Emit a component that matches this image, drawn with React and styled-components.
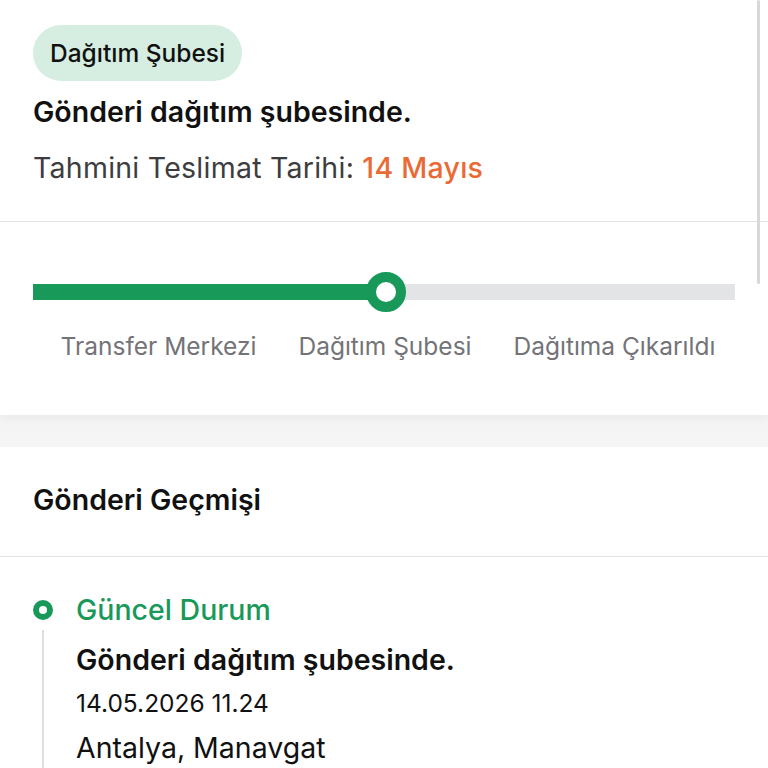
import React from 'react';
import styled, { createGlobalStyle } from 'styled-components';

const GlobalStyle = createGlobalStyle`
  html, body {
    margin: 0;
    padding: 0;
    background: #f5f5f5;
    font-family: Inter, "Noto Sans", sans-serif;
    -webkit-font-smoothing: antialiased;
  }
`;

const Page = styled.div`
  position: relative;
  width: 768px;
  height: 768px;
  overflow: hidden;
  background: #f5f5f5;
`;

const ScrollThumb = styled.div`
  position: absolute;
  top: 0;
  right: 8px;
  width: 3px;
  height: 284px;
  border-radius: 2px;
  background: #d8d8d8;
`;

const Card = styled.section`
  background: #fff;
  box-shadow: ${p => (p.$shadow ? '0 4px 10px rgba(0,0,0,0.05)' : 'none')};
  margin-bottom: ${p => p.$gap || 0}px;
`;

const Summary = styled.div`
  display: flex;
  flex-direction: column;
  align-items: flex-start;
  padding: 25px 33px 0;
  height: 222px;
  box-sizing: border-box;
  border-bottom: 1px solid #e3e3e3;
`;

const Badge = styled.span`
  display: inline-flex;
  align-items: center;
  height: 56px;
  padding: 0 17px;
  border-radius: 28px;
  background: #d5eee1;
  color: #111;
  font-size: 24.5px;
  font-weight: 500;
`;

const Headline = styled.div`
  margin-top: 14px;
  font-size: 28.5px;
  font-weight: 600;
  color: #111;
  line-height: 34px;
`;

const Eta = styled.div`
  margin-top: 22px;
  font-size: 28.5px;
  color: #3d3d3f;
  line-height: 34px;
  letter-spacing: 0.25px;
`;

const EtaDate = styled.span`
  color: #ea6a35;
  font-weight: 500;
`;

const Progress = styled.div`
  height: 193px;
  box-sizing: border-box;
  padding-top: 50px;
`;

const Track = styled.div`
  display: flex;
  align-items: center;
  margin: 0 33px;
  height: 40px;
`;

const Fill = styled.div`
  height: 16px;
  width: ${p => p.$width}px;
  background: ${p => (p.$done ? '#18995a' : '#e3e4e6')};
  flex: ${p => (p.$grow ? 1 : 'none')};
`;

const Knob = styled.div`
  width: 40px;
  height: 40px;
  box-sizing: border-box;
  border-radius: 50%;
  border: 10px solid #18995a;
  background: #fff;
  margin: 0 -20px;
  position: relative;
  z-index: 1;
  flex: none;
`;

const Steps = styled.div`
  display: flex;
  justify-content: center;
  gap: 42px;
  margin-top: 19px;
  padding-left: 8px;
  line-height: 30px;
`;

const Step = styled.span`
  font-size: 24.5px;
  color: #737378;
`;

const HistoryHead = styled.div`
  height: 110px;
  box-sizing: border-box;
  padding: 36px 33px 0;
  border-bottom: 1px solid #e3e3e3;
  font-size: 28.5px;
  font-weight: 600;
  color: #111;
  line-height: 34px;
`;

const Timeline = styled.div`
  padding: 36px 33px 0;
`;

const Entry = styled.div`
  display: grid;
  grid-template-columns: 43px 1fr;
`;

const Rail = styled.div`
  display: flex;
  flex-direction: column;
  align-items: center;
  width: 20px;
  padding-top: 7px;
`;

const Dot = styled.div`
  width: 20px;
  height: 20px;
  box-sizing: border-box;
  border-radius: 50%;
  border: 6px solid #18995a;
  flex: none;
`;

const Line = styled.div`
  width: 2px;
  flex: 1;
  margin-top: 10px;
  background: #dedede;
`;

const EntryBody = styled.div`
  display: flex;
  flex-direction: column;
`;

const EntryTitle = styled.div`
  font-size: 28.5px;
  font-weight: 500;
  color: #18995a;
  line-height: 34px;
`;

const EntryText = styled.div`
  margin-top: ${p => p.$mt}px;
  font-size: ${p => p.$size || 28.5}px;
  font-weight: ${p => p.$weight || 400};
  color: #111;
  line-height: ${p => (p.$size ? 30 : 34)}px;
`;

export default function App() {
  return (
    <Page>
      <GlobalStyle />
      <Card $shadow $gap={32}>
        <Summary>
          <Badge>Dağıtım Şubesi</Badge>
          <Headline>Gönderi dağıtım şubesinde.</Headline>
          <Eta>
            Tahmini Teslimat Tarihi: <EtaDate>14 Mayıs</EtaDate>
          </Eta>
        </Summary>
        <Progress>
          <Track>
            <Fill $done $width={353} />
            <Knob />
            <Fill $grow />
          </Track>
          <Steps>
            <Step>Transfer Merkezi</Step>
            <Step>Dağıtım Şubesi</Step>
            <Step>Dağıtıma Çıkarıldı</Step>
          </Steps>
        </Progress>
      </Card>
      <Card>
        <HistoryHead>Gönderi Geçmişi</HistoryHead>
        <Timeline>
          <Entry>
            <Rail>
              <Dot />
              <Line />
            </Rail>
            <EntryBody>
              <EntryTitle>Güncel Durum</EntryTitle>
              <EntryText $mt={16} $weight={600}>Gönderi dağıtım şubesinde.</EntryText>
              <EntryText $mt={11} $size={24.5}>14.05.2026 11.24</EntryText>
              <EntryText $mt={13}>Antalya, Manavgat</EntryText>
              <EntryText $mt={20}>&nbsp;</EntryText>
            </EntryBody>
          </Entry>
        </Timeline>
      </Card>
      <ScrollThumb />
    </Page>
  );
}
